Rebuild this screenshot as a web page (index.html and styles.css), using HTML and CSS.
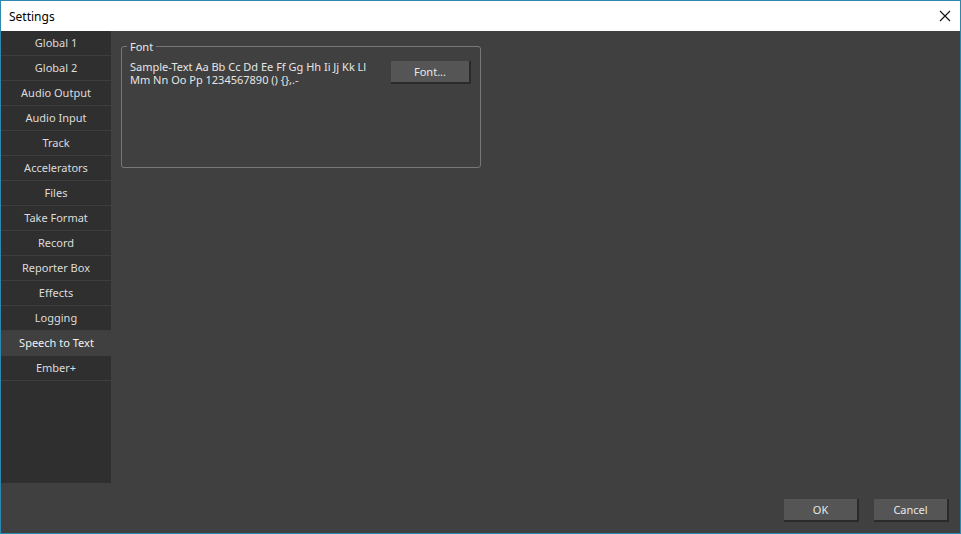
FILE: index.html
```html
<!DOCTYPE html>
<html>
<head>
<meta charset="utf-8">
<title>Settings</title>
<link rel="stylesheet" href="styles.css">
</head>
<body>
<div class="window">
  <div class="titlebar">
    <span class="title">Settings</span>
    <span class="close"><svg width="12" height="12" viewBox="0 0 12 12"><path d="M1 1 L11 11 M11 1 L1 11" stroke="#111" stroke-width="1.1" fill="none"/></svg></span>
  </div>
  <div class="client">
    <div class="top">
      <ul class="nav">
        <li>Global 1</li>
        <li>Global 2</li>
        <li>Audio Output</li>
        <li>Audio Input</li>
        <li>Track</li>
        <li>Accelerators</li>
        <li>Files</li>
        <li>Take Format</li>
        <li>Record</li>
        <li>Reporter Box</li>
        <li>Effects</li>
        <li>Logging</li>
        <li class="active">Speech to Text</li>
        <li>Ember+</li>
      </ul>
      <div class="content">
        <fieldset class="group">
          <legend>Font</legend>
          <div class="group-row">
            <div class="sample">
              <div class="sample-line">Sample-Text Aa Bb Cc Dd Ee Ff Gg Hh Ii Jj Kk Ll</div>
              <div class="sample-line">Mm Nn Oo Pp 1234567890 () {},.-</div>
            </div>
            <button class="btn btn-font">Font...</button>
          </div>
        </fieldset>
      </div>
    </div>
    <div class="footer">
      <button class="btn">OK</button>
      <button class="btn">Cancel</button>
    </div>
  </div>
</div>
</body>
</html>
```
FILE: styles.css
```css
* { box-sizing: border-box; }
html, body { margin: 0; padding: 0; }
body {
  font-family: "Noto Sans", "Open Sans", sans-serif;
  font-size: 11px;
  background: #3f403f;
}
.window {
  width: 961px;
  height: 534px;
  border: 1px solid #2e88ad;
  display: flex;
  flex-direction: column;
}
.titlebar {
  height: 30px;
  background: #ffffff;
  display: flex;
  align-items: center;
  justify-content: space-between;
  padding: 0 9px 0 8px;
  flex: none;
}
.title {
  color: #000;
  font-size: 12px;
  padding-top: 1px;
}
.close {
  display: flex;
  width: 12px;
  height: 12px;
}
.client {
  flex: 1;
  display: flex;
  flex-direction: column;
  background: #3f403f;
  min-height: 0;
}
.top {
  flex: 1;
  display: flex;
  min-height: 0;
}
.nav {
  list-style: none;
  margin: 0;
  padding: 0;
  width: 110px;
  background: #2f2f2f;
  flex: none;
}
.nav li {
  height: 25px;
  line-height: 24px;
  border-bottom: 1px solid #3d3d3d;
  text-align: center;
  color: #dcdcdc;
  white-space: nowrap;
}
.nav li.active {
  background: #3f403f;
  color: #f2f2f2;
  margin-right: -1px;
  border-bottom-color: #3f403f;
}
.content {
  flex: 1;
  padding: 9px 0 0 10px;
}
.group {
  width: 360px;
  height: 128px;
  margin: 0;
  padding: 0 9px 0 8px;
  border: 1px solid #777877;
  border-radius: 3px;
}
.group legend {
  color: #e8e8e8;
  padding: 0 3px;
  margin-left: -3px;
  line-height: 13px;
}
.group-row {
  display: flex;
  justify-content: space-between;
  align-items: flex-start;
  padding-top: 7px;
}
.sample {
  color: #e6e6e6;
  white-space: nowrap;
}
.sample-line {
  height: 13px;
  line-height: 13px;
}
.btn {
  font-family: inherit;
  font-size: 11px;
  color: #e8e8e8;
  background: #545554;
  border: none;
  border-right: 2px solid #2a2a2a;
  border-bottom: 2px solid #2a2a2a;
  width: 75px;
  height: 23px;
  padding: 0;
  cursor: default;
}
.btn-font {
  width: 80px;
  margin-top: 1px;
}
.footer {
  height: 50px;
  flex: none;
  display: flex;
  justify-content: flex-end;
  gap: 15px;
  padding: 16px 11px 0 0;
}
```
